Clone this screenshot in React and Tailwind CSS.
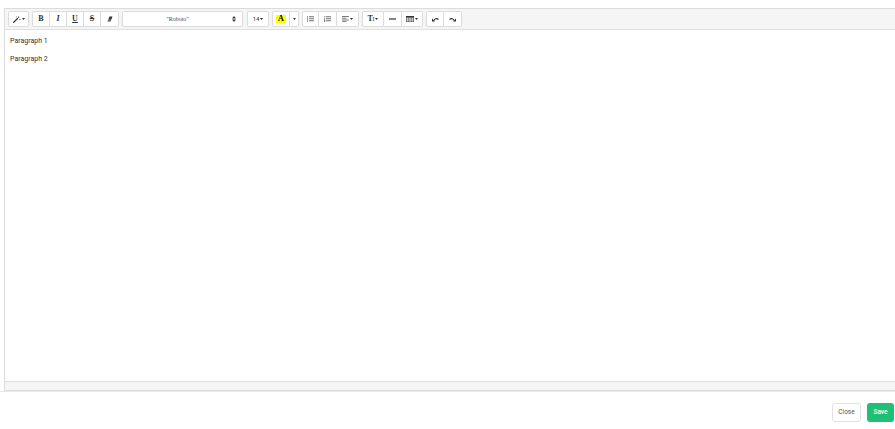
import React from "react";

const Caret = () => (
  <svg width="3" height="2" viewBox="0 0 6 4" className="ml-[1px]">
    <path d="M0 0h6L3 4z" fill="#333" />
  </svg>
);

function Btn({ w = "w-[18px]", children, first, last, single, className = "" }) {
  const r = single
    ? "rounded-[2px] border-l"
    : first
    ? "rounded-l-[2px] border-l"
    : last
    ? "rounded-r-[2px]"
    : "";
  return (
    <div
      className={`${w} h-[16px] flex items-center justify-center border-y border-r border-[#dcdcdc] bg-white text-[#333] ${r} ${className}`}
    >
      {children}
    </div>
  );
}

function Toolbar() {
  return (
    <div className="h-[21px] bg-[#f5f5f5] border-b border-[#e0e0e0] flex items-center pl-[3px] gap-[3px]">
      {/* magic wand */}
      <Btn w="w-[21px]" single>
        <svg width="8" height="7" viewBox="0 0 16 14">
          <path d="M1 13L9 5" stroke="#333" strokeWidth="2.2" strokeLinecap="round" />
          <path d="M11 1v3M9.5 2.5h3M14 6v2M13 7h2M7 1v1.5" stroke="#333" strokeWidth="1.2" />
        </svg>
        <Caret />
      </Btn>

      <div className="flex">
        <Btn w="w-[18px]" first>
          <span className="text-[8px] font-bold leading-none font-['Liberation_Serif',serif]">B</span>
        </Btn>
        <Btn w="w-[17px]">
          <span className="text-[8px] font-bold italic leading-none font-['Liberation_Serif',serif]">I</span>
        </Btn>
        <Btn w="w-[17px]">
          <span className="text-[8px] font-bold underline leading-none font-['Liberation_Serif',serif]">U</span>
        </Btn>
        <Btn w="w-[17px]">
          <span className="text-[8px] font-bold line-through leading-none font-['Liberation_Serif',serif]">S</span>
        </Btn>
        <Btn w="w-[18px]" last>
          <svg width="6" height="6" viewBox="0 0 12 12">
            <path d="M5 1h6L7 11H1z" fill="#333" />
            <path d="M2.2 8h5.2" stroke="#fff" strokeWidth="1" />
          </svg>
        </Btn>
      </div>

      <div className="w-[121px] h-[16px] border border-[#dcdcdc] rounded-[2px] bg-white flex items-center">
        <span className="flex-1 text-center text-[6px] text-[#444] font-['Liberation_Serif',serif]">"Roboto"</span>
        <svg width="4" height="6" viewBox="0 0 8 12" className="mr-[6px]">
          <path d="M0 5L4 0l4 5zM0 7l4 5 4-5z" fill="#333" />
        </svg>
      </div>

      <Btn w="w-[22px]" single className="ml-[1px]">
        <span className="text-[6px] leading-none">14</span>
        <Caret />
      </Btn>

      <div className="flex">
        <Btn w="w-[18px]" first>
          <span className="bg-[#ffff00] px-[2px] text-[8px] font-bold leading-none font-['Liberation_Serif',serif] text-black">A</span>
        </Btn>
        <Btn w="w-[9px]" last>
          <Caret />
        </Btn>
      </div>

      <div className="flex">
        <Btn w="w-[17px]" first>
          <svg width="7" height="6" viewBox="0 0 14 12">
            <path d="M0 1h2v2H0zM0 5h2v2H0zM0 9h2v2H0z" fill="#333" />
            <path d="M4 1.5h10M4 5.5h10M4 9.5h10" stroke="#333" strokeWidth="1.4" />
          </svg>
        </Btn>
        <Btn w="w-[18px]">
          <svg width="7" height="6" viewBox="0 0 14 12">
            <path d="M0 0.5h2v2.5M0 5h2l-2 2h2M0 9h2v2.5H0M0 10.2h2" stroke="#333" strokeWidth="0.9" fill="none" />
            <path d="M4 1.5h10M4 5.5h10M4 9.5h10" stroke="#333" strokeWidth="1.4" />
          </svg>
        </Btn>
        <Btn w="w-[22px]" last>
          <svg width="7" height="6" viewBox="0 0 14 12">
            <path d="M0 1h14M0 4.5h9M0 8h14M0 11.3h9" stroke="#333" strokeWidth="1.3" />
          </svg>
          <Caret />
        </Btn>
      </div>

      <div className="flex">
        <Btn w="w-[22px]" first>
          <span className="text-[8px] font-bold leading-none font-['Liberation_Serif',serif]">T</span>
          <span className="text-[6px] leading-none font-['Liberation_Serif',serif] -ml-[0.5px]">I</span>
          <Caret />
        </Btn>
        <Btn w="w-[18px]">
          <svg width="7" height="2" viewBox="0 0 14 4">
            <path d="M0 2h14" stroke="#333" strokeWidth="2.4" />
          </svg>
        </Btn>
        <Btn w="w-[21px]" last>
          <svg width="8" height="6" viewBox="0 0 16 12">
            <rect x="0.5" y="0.5" width="15" height="11" fill="none" stroke="#333" />
            <path d="M0 4h16M0 8h16M5.5 0v12M10.5 0v12" stroke="#333" strokeWidth="1" />
            <rect x="0" y="0" width="16" height="3" fill="#333" />
          </svg>
          <Caret />
        </Btn>
      </div>

      <div className="flex">
        <Btn w="w-[18px]" first>
          <svg width="7" height="5" viewBox="0 0 14 10">
            <path d="M4 7C5 3 9 2 13 5" stroke="#333" strokeWidth="2.2" fill="none" />
            <path d="M0 3l0 6 6 0z" fill="#333" />
          </svg>
        </Btn>
        <Btn w="w-[18px]" last>
          <svg width="7" height="5" viewBox="0 0 14 10">
            <path d="M10 7C9 3 5 2 1 5" stroke="#333" strokeWidth="2.2" fill="none" />
            <path d="M14 3l0 6-6 0z" fill="#333" />
          </svg>
        </Btn>
      </div>
    </div>
  );
}

export default function App() {
  return (
    <div className="w-[895px] h-[429px] overflow-hidden bg-white font-['Roboto','Liberation_Sans',sans-serif] flex flex-col">
      <div className="pt-[8px] pl-[4px]">
        <div className="w-[920px] border border-[#dcdcdc]">
          <Toolbar />
          <div className="h-[351px] px-[5px] pt-[7px] text-[7px] text-[#333] flex flex-col gap-[10px]">
            <p className="leading-[8px]">Paragraph 1</p>
            <p className="leading-[8px]">Paragraph 2</p>
          </div>
          <div className="h-[9px] bg-[#f5f5f5] border-t border-[#e0e0e0]"></div>
        </div>
      </div>
      <div className="border-t border-[#e9e9e9] flex justify-end items-center gap-[6px] pt-[11px] pr-[1px]">
        <button className="w-[29px] h-[19px] border border-[#e2e2e2] rounded-[3px] bg-white text-[6.5px] text-[#555]">
          Close
        </button>
        <button className="w-[27px] h-[19px] rounded-[3px] bg-[#1fbf75] text-[6.5px] font-medium text-white">
          Save
        </button>
      </div>
    </div>
  );
}
